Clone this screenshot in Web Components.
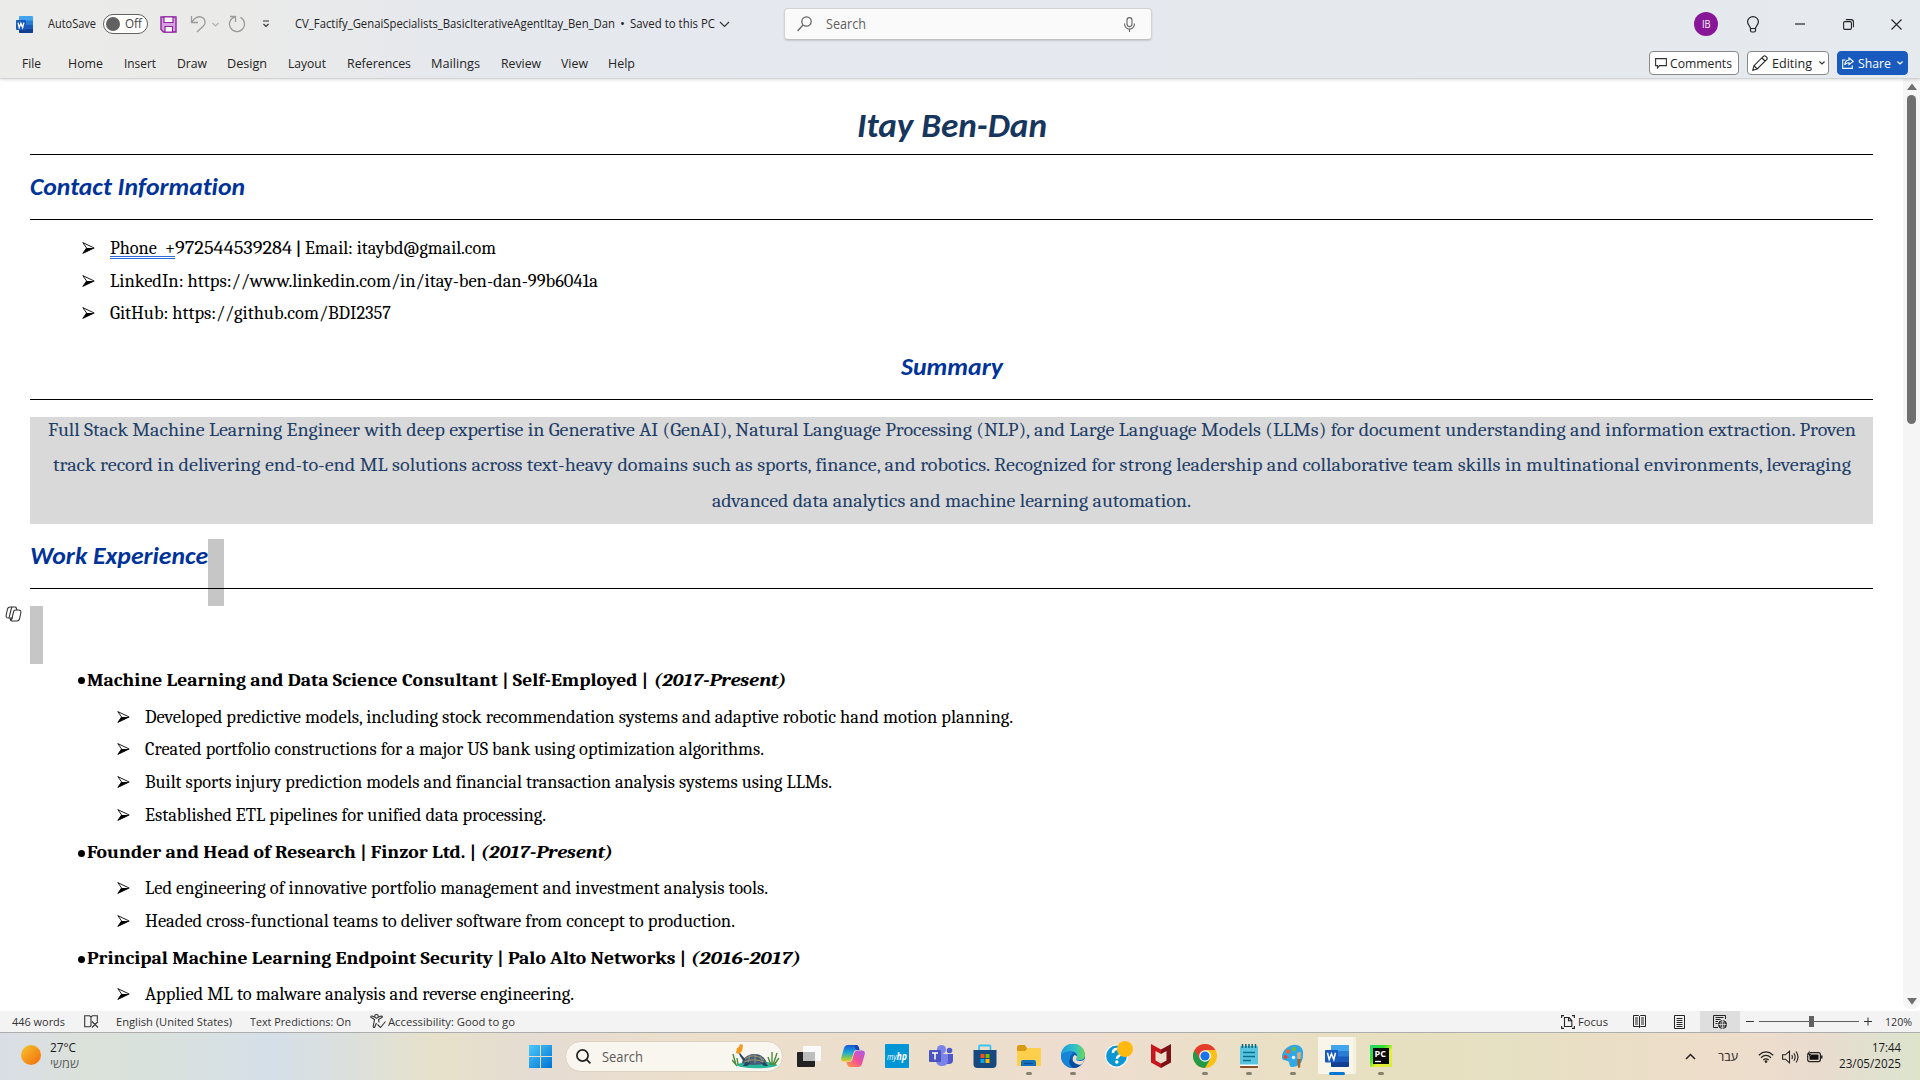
<!DOCTYPE html>
<html lang="en">
<head>
<meta charset="utf-8">
<title>Word</title>
<style>
html,body{margin:0;height:100%;overflow:hidden;background:#fff}
body{font-family:"Open Sans","Noto Sans",sans-serif;color:#242424}
</style>
</head>
<body>
<word-app></word-app>
<script>
const define=(name,html)=>customElements.define(name,class extends HTMLElement{
  constructor(){super();this.attachShadow({mode:'open'}).innerHTML=html;}
});

/* Text run stretched to an exact advance width: w = width, g = gap before it */
customElements.define('fit-text',class extends HTMLElement{
  constructor(){super();this.attachShadow({mode:'open'}).innerHTML=`<style>
    :host{display:inline-block;white-space:pre;flex:none;vertical-align:baseline;text-align:left}
    span{display:inline-block;transform-origin:0 50%;white-space:pre}</style><span><slot></slot></span>`;}
  connectedCallback(){
    const w=+this.getAttribute('w'),g=this.getAttribute('g');
    if(g)this.style.marginLeft=g+'px';
    const s=this.shadowRoot.querySelector('span');
    const fit=()=>{s.style.transform='none';this.style.width='auto';
      const n=s.getBoundingClientRect().width;
      this.style.width=w+'px';
      if(n)s.style.transform='scaleX('+(w/n)+')';};
    fit();
    requestAnimationFrame(fit);
  }
});

define('title-bar',`<style>
:host{display:flex;align-items:center;height:48px;font-size:12px;line-height:20px;color:#242424}
svg{display:block;flex:none}
.toggle{display:flex;align-items:center;box-sizing:border-box;width:45px;height:20px;margin-left:7px;border:1px solid #616161;border-radius:10px;background:#fff;color:#424242}
.knob{width:14px;height:14px;border-radius:50%;background:#616161;margin-left:2px}
.search{display:flex;align-items:center;box-sizing:border-box;width:368px;height:32px;margin-left:54px;border:1px solid #d2d3d5;border-bottom-color:#bfc0c2;border-radius:4px;background:#fafafa;color:#616161;box-shadow:0 1px 2px #0002;font-size:14px}
.ava{display:flex;align-items:center;justify-content:center;width:24px;height:24px;border-radius:50%;background:#881798;color:#fff;font-size:11.5px;margin-left:542px}
</style>
<svg style="margin-left:16px" width="17" height="17" viewBox="0 0 17 17"><rect x="3" y="0" width="14" height="17" rx="1" fill="#41a5ee"/><path d="M3 4.5h14v4H3z" fill="#2b7cd3"/><path d="M3 8.5h14v4H3z" fill="#185abd"/><path d="M3 12.5h14V16a1 1 0 0 1-1 1H4a1 1 0 0 1-1-1z" fill="#103f91"/><rect y="4" width="10" height="10" rx="1" fill="#185abd"/><path d="M2 6.6l1.2 5 1.7-4.4 1.7 4.4 1.3-5" fill="none" stroke="#fff" stroke-width="1.3"/></svg>
<fit-text g="15" w="48">AutoSave</fit-text>
<div class="toggle"><div class="knob"></div><fit-text g="5" w="17">Off</fit-text></div>
<svg style="margin-left:12px" width="17" height="17" viewBox="0 0 17 17"><path d="M1 1h15v15H3.5L1 13.5z" fill="#d9a0e0" stroke="#8e24a0" stroke-width="1.4"/><path d="M4 1h9v5.5H4zM5 10.500h7.500V16H5z" fill="#fff" stroke="#8e24a0" stroke-width="1.200"/></svg>
<svg style="margin-left:13px" width="17" height="18" viewBox="0 0 17 18" fill="none" stroke="#9b9b9b" stroke-width="1.3"><path d="M1.500 1v6.500H8M1.800 7.200C4 3 8 .8 11.600 2.200c4 1.600 4.600 6 1.800 8.800L7 17"/></svg>
<svg style="margin-left:5px" width="7" height="5" viewBox="0 0 7 5" fill="none" stroke="#b0b0b0" stroke-width="1.200"><path d="M.5 1l3 3 3-3"/></svg>
<svg style="margin-left:9px" width="18" height="18" viewBox="0 0 18 18" fill="none" stroke="#9b9b9b" stroke-width="1.3"><path d="M2 1.500h5.500V7M7 1.800A7.500 7.500 0 1 0 12.500 2.400"/></svg>
<svg style="margin-left:16px" width="8" height="8" viewBox="0 0 8 8" fill="none" stroke="#333" stroke-width="1.200"><path d="M1 1h6M1.500 4L4 6.500 6.500 4"/></svg>
<fit-text g="25" w="320">CV_Factify_GenaiSpecialists_BasicIterativeAgentItay_Ben_Dan</fit-text>
<fit-text g="5" w="5">•</fit-text>
<fit-text g="5" w="85">Saved to this PC</fit-text>
<svg style="margin-left:4px" width="11" height="7" viewBox="0 0 11 7" fill="none" stroke="#333" stroke-width="1.200"><path d="M1 1l4.500 4.500L10 1"/></svg>
<div class="search">
<svg style="margin-left:12px" width="16" height="16" viewBox="0 0 16 16" fill="none" stroke="#616161" stroke-width="1.200"><circle cx="9.500" cy="5.500" r="4.700"/><path d="M6 9L.6 15"/></svg>
<fit-text g="13" w="40">Search</fit-text>
<svg style="margin-left:258px" width="11" height="15" viewBox="0 0 11 15" fill="none" stroke="#616161" stroke-width="1.100"><rect x="3" y=".6" width="5" height="9" rx="2.500"/><path d="M.6 6.500v.7a4.900 4.900 0 0 0 9.800 0v-.7M5.500 12v3"/></svg>
</div>
<div class="ava"><fit-text w="8.500">IB</fit-text></div>
<svg style="margin-left:29px" width="12" height="17" viewBox="0 0 12 17" fill="none" stroke="#242424" stroke-width="1.200"><path d="M3.500 12.500c0-2.300-2.900-3.300-2.900-6.800a5.400 5.100 0 0 1 10.800 0c0 3.500-2.900 4.500-2.900 6.800zM3.500 12.500V14.500q0 1.500 1.500 1.500h2q1.500 0 1.500-1.500v-2"/></svg>
<svg style="margin-left:36px" width="10" height="2"><path d="M0 1h10" stroke="#242424" stroke-width="1.200"/></svg>
<svg style="margin-left:38px" width="11" height="11" viewBox="0 0 11 11" fill="none" stroke="#242424" stroke-width="1.100"><rect x=".6" y="2.600" width="7.800" height="7.800" rx="1.300"/><path d="M2.800.6h5.400q2.200 0 2.200 2.200v5.400"/></svg>
<svg style="margin-left:37px" width="11" height="11" viewBox="0 0 11 11"><path d="M.5.5l10 10M10.500.5l-10 10" stroke="#242424" stroke-width="1.100"/></svg>
`);

define('menu-bar',`<style>
:host{display:flex;align-items:center;height:30px;font-size:13px;line-height:22px;color:#242424}
svg{display:block;flex:none}
.btn{display:flex;align-items:center;box-sizing:border-box;height:24px;border:1px solid #8a8886;border-radius:4px;background:#fff;flex:none}
.share{background:#185abd;border-color:#185abd;color:#fff}
</style>
<fit-text g="22" w="19">File</fit-text><fit-text g="27" w="35">Home</fit-text><fit-text g="21" w="32">Insert</fit-text><fit-text g="21" w="30">Draw</fit-text><fit-text g="20" w="40">Design</fit-text><fit-text g="21" w="38">Layout</fit-text><fit-text g="21" w="64">References</fit-text><fit-text g="20" w="49">Mailings</fit-text><fit-text g="21" w="40">Review</fit-text><fit-text g="20" w="27">View</fit-text><fit-text g="20" w="27">Help</fit-text>
<div class="btn" style="margin-left:1014px;width:90px"><svg style="margin-left:5px" width="12" height="11" viewBox="0 0 12 11"><path d="M.6.6h10.800v7H4.500L2.500 10V7.600H.6z" fill="none" stroke="#333" stroke-width="1.100"/></svg><fit-text g="3" w="62">Comments</fit-text></div>
<div class="btn" style="margin-left:8px;width:82px"><svg style="margin-left:4px" width="16" height="16" viewBox="0 0 16 16" fill="none" stroke="#242424" stroke-width="1.100"><path d="M.8 15.200l1.200-4.500L11.600 1.200q1-.8 2 .0l1.200 1.200q.8 1 0 2L5.200 14zM10 3l3 3M2 10.700l3.200 3.300"/></svg><fit-text g="4" w="40">Editing</fit-text><svg style="margin-left:7px" width="6" height="4" viewBox="0 0 6 4" fill="none" stroke="#333" stroke-width="1.200"><path d="M.4.5L3 3 5.600.5"/></svg></div>
<div class="btn share" style="margin-left:8px;width:71px"><svg style="margin-left:4px" width="12" height="12" viewBox="0 0 12 12" fill="none" stroke="#fff" stroke-width="1.100"><path d="M3.500 3H.7v8.400h9.600V8.500M7 1l4.200 3.400L7 7.600V5.800C4.800 5.600 3.600 6.600 2.800 8c.1-3 1.700-4.700 4.200-5z"/></svg><fit-text g="4" w="33">Share</fit-text><svg style="margin-left:6px" width="6" height="4" viewBox="0 0 6 4" fill="none" stroke="#fff" stroke-width="1.200"><path d="M.4.5L3 3 5.600.5"/></svg></div>
`);

define('doc-heading',`<style>
:host{display:block;box-sizing:border-box;border-bottom:1px solid #000;position:relative;font:italic 700 25px/32px Carlito,Calibri,Lato,sans-serif;font-variant-ligatures:none;color:#039;white-space:nowrap}
:host([align=center]){text-align:center}
</style><slot></slot>`);

define('arrow-item',`<style>
:host{display:flex;align-items:center;height:var(--row,32.500px);line-height:24px}
svg{flex:none;width:13px;height:12px;margin-right:15px;display:block}
</style><svg viewBox="0 0 13 12"><path d="M.8.6L12.200 6 .8 11.400 4.600 6z" fill="#fff" stroke="#000" stroke-width=".9"/><path d="M4.600 6h7.600L.8 11.400z" fill="#000"/></svg><slot></slot>`);

define('job-title',`<style>
:host{display:flex;align-items:center;height:33px;margin:4.200px 0 3.600px 48px;font-weight:700;font-size:19px;line-height:28px}
i{width:7px;height:7px;border-radius:50%;background:#000;margin:2px 2px 0 0;flex:none}
::slotted([it]){font-style:italic}
</style><i></i><slot></slot>`);

define('word-document',`<style>
:host{display:block;width:1843px;height:932px;padding-left:30px;overflow:hidden;background:#fff;color:#000;font:17.600px/24px Caladea,Cambria,"Liberation Serif",serif;position:relative;flex:none;box-sizing:content-box}
.contact{padding:12px 0 0 52px;height:97.500px}
.ph{display:inline-block;position:relative}
.ph svg{position:absolute;left:0;top:20px}
.sum{background:#d9d9d9;height:107px;margin-top:17px;color:#1f3f68;font-size:19.200px;line-height:35.300px;display:flex;flex-direction:column;align-items:center}
.sum fit-text:first-child{margin-top:-4px}
.mark{position:absolute;left:178px;top:15px;width:16px;height:67px;background:linear-gradient(#000,#000) 0 49px/100% 1px no-repeat,#c6c6c6}
.empty{margin-top:17px;width:13px;height:58px;background:#c6c6c6}
.duties{--row:32.600px;padding-left:87px;margin-bottom:4.600px}
.cop{position:absolute;left:5px;top:527px}
</style>
<doc-heading align="center" style="height:76px;padding-top:29px;font-size:33.500px;line-height:36px;color:#17365d"><fit-text w="190">Itay Ben-Dan</fit-text></doc-heading>
<doc-heading style="height:65px;padding-top:16px"><fit-text w="215">Contact Information</fit-text></doc-heading>
<div class="contact">
<arrow-item><span class="ph"><fit-text w="65">Phone  +</fit-text><svg width="65" height="4"><path d="M0 .5h65M0 2.500h65" stroke="#2b6cd8" stroke-width="1"/></svg></span><fit-text w="117">972544539284</fit-text><fit-text w="13" style="font-weight:700"> | </fit-text><fit-text w="191">Email: itaybd@gmail.com</fit-text></arrow-item>
<arrow-item><fit-text w="488">LinkedIn: https://www.linkedin.com/in/itay-ben-dan-99b6041a</fit-text></arrow-item>
<arrow-item><fit-text w="281">GitHub: https://github.com/BDI2357</fit-text></arrow-item>
</div>
<doc-heading align="center" style="height:70.500px;padding-top:21.500px"><fit-text w="102">Summary</fit-text></doc-heading>
<div class="sum"><fit-text w="1808">Full Stack Machine Learning Engineer with deep expertise in Generative AI (GenAI), Natural Language Processing (NLP), and Large Language Models (LLMs) for document understanding and information extraction. Proven</fit-text><fit-text w="1798">track record in delivering end-to-end ML solutions across text-heavy domains such as sports, finance, and robotics. Recognized for strong leadership and collaborative team skills in multinational environments, leveraging</fit-text><fit-text w="479">advanced data analytics and machine learning automation.</fit-text></div>
<doc-heading style="height:65px;padding-top:15.500px"><fit-text w="178">Work Experience</fit-text><div class="mark"></div></doc-heading>
<div class="empty"></div>
<svg class="cop" width="17" height="16" viewBox="0 0 17 16" fill="none" stroke="#333" stroke-width="1.100"><path d="M5 1h5q1 0 1.300 1l.5 2h1.700q3 0 2.300 3l-1.300 6q-.6 2-2.500 2H7q-1.200 0-1.500-1l-.4-2H3.500Q.6 12 1.200 9l1.300-6Q3 1 5 1zM7.500 1Q6.700 1.200 6.200 3L4.500 10q-.4 2-1 2M11.800 4H10Q9 4 8.500 6l-1.700 7q-.4 2-1 2M5.100 12H8"/></svg>
<job-title style="margin-top:-.600px;margin-bottom:4.200px"><fit-text w="561">Machine Learning and Data Science Consultant | Self-Employed |</fit-text><fit-text it g="5.500" w="132.500">(2017-Present)</fit-text></job-title>
<div class="duties">
<arrow-item><fit-text w="868">Developed predictive models, including stock recommendation systems and adaptive robotic hand motion planning.</fit-text></arrow-item>
<arrow-item><fit-text w="619">Created portfolio constructions for a major US bank using optimization algorithms.</fit-text></arrow-item>
<arrow-item><fit-text w="687">Built sports injury prediction models and financial transaction analysis systems using LLMs.</fit-text></arrow-item>
<arrow-item><fit-text w="401">Established ETL pipelines for unified data processing.</fit-text></arrow-item>
</div>
<job-title><fit-text w="389">Founder and Head of Research | Finzor Ltd. |</fit-text><fit-text it g="5" w="132">(2017-Present)</fit-text></job-title>
<div class="duties">
<arrow-item><fit-text w="623">Led engineering of innovative portfolio management and investment analysis tools.</fit-text></arrow-item>
<arrow-item><fit-text w="590">Headed cross-functional teams to deliver software from concept to production.</fit-text></arrow-item>
</div>
<job-title style="margin-bottom:2.800px"><fit-text w="599">Principal Machine Learning Endpoint Security | Palo Alto Networks |</fit-text><fit-text it g="5" w="110">(2016-2017)</fit-text></job-title>
<div class="duties"><arrow-item><fit-text w="429">Applied ML to malware analysis and reverse engineering.</fit-text></arrow-item></div>
`);

define('scroll-bar',`<style>
:host{display:flex;flex-direction:column;align-items:center;width:17px;height:930px;margin-left:30px;background:#f5f5f5;border-radius:0 0 8px 8px;flex:none}
svg{display:block;margin-top:4px}
.thumb{width:9px;height:329px;border-radius:5px;background:#6f6f6f;margin:5px 0 570px}
</style><svg width="10" height="7"><path d="M5 0.500L10 7H0z" fill="#6f6f6f"/></svg><div class="thumb"></div><svg width="10" height="7"><path d="M0 0h10L5 6.800z" fill="#6f6f6f"/></svg>`);

define('status-bar',`<style>
:host{display:flex;align-items:center;height:21px;background:#f3f3f3;border-bottom:1px solid #adadad;font-size:11.500px;line-height:20px;color:#333}
svg{display:block;flex:none}
.sel{display:flex;align-items:center;justify-content:center;width:40px;height:21px;margin-left:15px;background:#dedede}
.slider{display:flex;align-items:center;width:100px;height:11px;margin-left:5px;background:linear-gradient(#616161,#616161) 0 5px/100% 1px no-repeat}
.slider i{width:5px;height:11px;background:#616161;margin-left:50px}
.d{margin-top:1px}
</style>
<fit-text g="12" w="53">446 words</fit-text>
<svg style="margin-left:19px" width="15" height="13" viewBox="0 0 15 13" fill="none" stroke="#333" stroke-width="1.100"><path d="M7 10.500V2L5.500.7H.7v11H6zM7 2L8.500.7h4.800V6M8 6.500l6 6M14 6.500l-6 6"/></svg>
<fit-text g="17" w="116">English (United States)</fit-text>
<fit-text class="d" g="18" w="101">Text Predictions: On</fit-text>
<svg style="margin-left:19px" width="16" height="15" viewBox="0 0 16 15" fill="none" stroke="#333" stroke-width="1.100"><circle cx="6.500" cy="2.300" r="1.800"/><path d="M4.700 3.300L2.200 2Q.6 1.800.8 3.200L4.500 5.500 3.200 12.500q.2 1.600 1.400.8L6.500 9M8.300 3.300L11 2q1.500-.1 1.300 1.200L8.600 5.500l.4 3M7.500 10.500l3 3L15.500 7.500"/></svg>
<fit-text class="d" g="2" w="127">Accessibility: Good to go</fit-text>
<svg style="margin-left:1046px" width="14" height="14" viewBox="0 0 14 14" fill="none" stroke="#242424" stroke-width="1.100"><path d="M.6 3V.6H3M11 .6h2.400V3M13.400 11v2.400H11M3 13.400H.6V11M3.500 2.500h4.500l2.800 3v6H3.500zM7.500 2.500v3.300h3.300"/></svg>
<fit-text class="d" g="3" w="30">Focus</fit-text>
<svg style="margin-left:25px" width="13" height="13" viewBox="0 0 13 13" fill="none" stroke="#242424" stroke-width="1"><path d="M6.500 1.500L5.500.5h-5v11h5l1 1 1-1h5V.5h-5zM6.500 1.500v11M2 3h3M2 5h3M2 7h3M2 9h3M8 3h3M8 5h3M8 7h3M8 9h3"/></svg>
<svg style="margin-left:28px" width="11" height="14" viewBox="0 0 11 14" fill="none" stroke="#242424" stroke-width="1"><path d="M.5.5h10v13H.5zM2.500 3.500h6M2.500 5.500h6M2.500 7.500h6M2.500 9.500h6M2.500 11.500h6"/></svg>
<div class="sel"><svg width="14" height="14" viewBox="0 0 14 14" fill="none" stroke="#242424" stroke-width="1"><path d="M12.500 4V.5H.5v12H5M2.500 2.500h8M2.500 4.500h5M2.500 6.500h2.500M2.500 8.500h2"/><circle cx="9.500" cy="9.500" r="4" fill="#333"/><path d="M5.500 9.500h8M9.500 5.500v8" stroke="#dedede" stroke-width=".8"/><ellipse cx="9.500" cy="9.500" rx="1.900" ry="4" stroke="#dedede" stroke-width=".7"/></svg></div>
<svg style="margin-left:6px" width="8" height="9"><path d="M0 4.500h8" stroke="#333"/></svg>
<div class="slider"><i></i></div>
<svg style="margin-left:5px" width="8" height="9"><path d="M0 4.500h8M4 .5v8" stroke="#333"/></svg>
<fit-text g="13" w="27">120%</fit-text>
`);

define('task-icon',`<style>
:host{display:flex;flex-direction:column;align-items:center;width:44px;height:47px;flex:none}
.i{display:flex;align-items:center;justify-content:center;height:24px;margin-top:11px}
b{display:none;width:6px;height:3px;border-radius:2px;background:#85816f;margin-top:4px}
:host([run]) b{display:block}
:host([active]) b{width:16px;background:#0078d4}
:host([active]){background:linear-gradient(#faf5ea,#faf5ea) 3px 4px/35px 37px no-repeat,linear-gradient(#f6f0df,#f6f0df) 3px 4px/38px 37px no-repeat}
</style><div class="i"><slot></slot></div><b></b>`);

define('task-bar',`<style>
:host{display:flex;height:47px;font-size:12px;line-height:16px;color:#1b1b1b;background:linear-gradient(90deg,#d9dee6 0,#dbe2d9 90px,#d9e1df 180px,#d5dfe8 270px,#dbe0de 340px,#e7e1ca 440px,#e5dcd3 530px,#ecdfcb 700px,#ecdecc 850px,#ebdfca 940px,#eeddd0 1080px,#ebdfc9 1200px,#e7e0c0 1390px,#e6e1c2 1500px,#e9dfc5 1580px,#eeddca 1720px,#e9dccf 1820px,#dfe2d0 1890px,#dee4cb 1920px)}
svg{display:block;flex:none}
.col{display:flex;flex-direction:column;margin-top:7px;flex:none}
.sun{width:20px;height:20px;border-radius:50%;margin:12px 0 0 21px;background:linear-gradient(135deg,#f7c52f,#f26a0a);flex:none}
.search{display:flex;align-items:center;box-sizing:border-box;width:218px;height:31px;margin:8px 4px 0 13px;border:1px solid #dcd2c2;border-radius:16px;background:#f9f5ef;font-size:14px;color:#5c5a57;flex:none}
.tray{display:flex;align-items:center;height:47px;flex:none}
</style>
<div class="sun"></div>
<div class="col" style="margin-left:9px;width:475px"><fit-text w="26">27°C</fit-text><fit-text w="29" style="color:#5a5f60;font-family:'Open Sans','DejaVu Sans',sans-serif">שמשי</fit-text></div>
<svg style="margin:12px 0 0 4px" width="23" height="23" viewBox="0 0 23 23"><defs><linearGradient id="g" x2="1" y2="1"><stop stop-color="#4cc9fb"/><stop offset="1" stop-color="#0072d2"/></linearGradient></defs><path d="M0 0h11v11H0zM12 0h11v11H12zM0 12h11v11H0zM12 12h11v11H12z" fill="url(#g)"/></svg>
<div class="search">
<svg style="margin-left:10px" width="15" height="15" viewBox="0 0 15 15" fill="none" stroke="#222" stroke-width="1.700"><circle cx="6.500" cy="6.500" r="5.600"/><path d="M10.600 10.600l3.800 3.800"/></svg>
<fit-text g="11" w="41">Search</fit-text>
<svg style="margin-left:89px" width="48" height="25" viewBox="0 0 48 25"><ellipse cx="25" cy="21" rx="20" ry="3.300" fill="#27b79a"/><path d="M1 10l3 11M5 14l1 7M0 16l5 6M45 9l-4 12M47 14l-5 7M40 8l0 13M36 13l3 8" stroke="#4a8c3a" stroke-width="1.400"/><path d="M10 19c0-4 6-10 13-9 6 0 10 4 12 9-6 2-18 3-25 0z" fill="#465d78"/><path d="M13 15q8-7 19 1M12 18q10-5 22 1" fill="none" stroke="#c6a24c" stroke-width=".8"/><path d="M18 11l-2 8M23 10v9M28 12l3 7" fill="none" stroke="#8fa6a0" stroke-width=".8"/><path d="M13 15L8 9Q6 8 8 12l4 6zM14 18l-3 4h4l4-3zM29 19l3 3h4l-3-4z" fill="#2c4464"/><path d="M4 9l1-5 2-1 1-3 3 1-1 6-3 3z" fill="#f39a1c"/></svg>
</div>
<task-icon><svg width="24" height="24" viewBox="0 0 24 24"><rect x="0" y="8" width="18" height="15" rx="1" fill="#222"/><rect x="6" y="2" width="18" height="15" rx="1" fill="#f9f9fa"/><path d="M6 8h12v9H6z" fill="#bdbdbd"/></svg></task-icon>
<task-icon><svg width="24" height="24" viewBox="0 0 24 24"><defs><linearGradient id="a" x2="0" y2="1"><stop stop-color="#1556d8"/><stop offset=".45" stop-color="#1aa8d5"/><stop offset=".8" stop-color="#8bcb4c"/><stop offset="1" stop-color="#f4c526"/></linearGradient><linearGradient id="b" x1="1" x2="0" y2="1"><stop stop-color="#a45cf0"/><stop offset=".5" stop-color="#f0509a"/><stop offset="1" stop-color="#ff9a3c"/></linearGradient></defs><path d="M7 1h8q2 0 2.700 2l.8 3h-3q-2 0-2.700 2l-2 7q-.8 2.500-3 2.500H3q-3.600 0-2.700-4L3 4q1-3 4-3z" fill="url(#a)"/><path d="M17 23H9q-2 0-2.700-2l-.8-3h3q2 0 2.700-2l2-7q.8-2.500 3-2.500H21q3.600 0 2.700 4L21 20q-1 3-4 3z" fill="url(#b)"/><path d="M13 1h2q2 0 2.700 2l.8 3H15z" fill="#1747b8"/></svg></task-icon>
<task-icon><svg width="24" height="24" viewBox="0 0 24 24"><rect width="24" height="24" rx="1" fill="#0096d6"/><text x="12" y="15.500" text-anchor="middle" textLength="20" lengthAdjust="spacingAndGlyphs" font-family="Open Sans" font-style="italic" fill="#fff" font-size="9">my<tspan font-weight="700" font-size="11">hp</tspan></text></svg></task-icon>
<task-icon><svg width="24" height="24" viewBox="0 0 24 24"><circle cx="12.500" cy="5.500" r="4.500" fill="#7b83eb"/><circle cx="20.500" cy="6.500" r="2.800" fill="#5059c9"/><path d="M16 10h8v6q0 4-4 4h-4z" fill="#5059c9"/><path d="M7 10h12v6q0 6-6 6t-6-6z" fill="#7b83eb"/><rect y="6" width="12" height="12" rx="1" fill="#4b53bc"/><path d="M3 9h6M6 9v6.500" stroke="#fff" stroke-width="1.500"/></svg></task-icon>
<task-icon><svg width="24" height="24" viewBox="0 0 24 24"><path d="M6 6V2.500Q6 1.500 7 1.500h9.500q1 0 1 1V6" fill="none" stroke="#3cc3f2" stroke-width="1.800"/><path d="M.5 6h23v14q0 4-4 4h-15q-4 0-4-4z" fill="#17497f"/><path d="M7.500 10H11.500v4h-4z" fill="#f25022"/><path d="M12.500 10h4v4h-4z" fill="#7fba00"/><path d="M7.500 15h4v4h-4z" fill="#00a4ef"/><path d="M12.500 15h4v4h-4z" fill="#ffb900"/></svg></task-icon>
<task-icon run><svg width="24" height="24" viewBox="0 0 24 24"><path d="M0 3q0-2 2-2h6l2 3v4H0z" fill="#d99a13"/><path d="M0 7h8l3-3h12q1 0 1 1v16q0 1-1 1H1q-1 0-1-1z" fill="#fdcf4d"/><path d="M4 22v-4q0-2 2-2h11q2 0 2 2v4z" fill="#1271bd"/><path d="M7 19.500h9" stroke="#0a4f8e" stroke-width="1.200"/></svg></task-icon>
<task-icon run><svg width="24" height="24" viewBox="0 0 24 24"><defs><linearGradient id="e" x2="1"><stop stop-color="#1b9ee0"/><stop offset=".6" stop-color="#35c1c4"/><stop offset="1" stop-color="#6bdc4b"/></linearGradient></defs><circle cx="12" cy="12" r="12" fill="#0f5fb0"/><path d="M0 12A12 12 0 0 1 24 11q0 5-5.500 5.300-3.500 0-3.500-1.600c0-1 1-1.200 1-3C16 9 13 7.500 9.500 7.500 4 7.500 0 12 0 12z" fill="url(#e)"/><path d="M0 12Q2 7.500 8 7.500q3 0 5 1.500c-4 1-5 6-3 9.500q2.500 4 5 5A12 12 0 0 1 0 12z" fill="#1685d8"/><path d="M15 14.700c0 1.600 2 2.500 4.500 2.200q2-.2 4-2-1 4-4 6-5-.5-7.500-4-1-3.500 1.500-6 2 .5 2.500 1.500 0 1-1 2.300z" fill="#eddccf"/><path d="M9.800 13q.5 6.500 7.500 8 2.200.2 3.500-1-3 4-8.800 4-4-3-3.800-7z" fill="#0d4c9c"/></svg></task-icon>
<task-icon><svg width="28" height="28" viewBox="0 0 28 28" style="margin:-2px 0 0 3px"><circle cx="11.500" cy="15" r="11" fill="#0b96d4" stroke="#fff" stroke-width="1.200"/><path d="M8 12q0-4 4-4t4 3.500q0 2-2.200 3.300-1.800 1-1.800 3" fill="none" stroke="#fff" stroke-width="2.600"/><circle cx="11.800" cy="21" r="1.700" fill="#fff"/><circle cx="20" cy="8" r="8" fill="#ffb90f"/></svg></task-icon>
<task-icon><svg width="20" height="24" viewBox="0 0 20 24"><path d="M0 0l10 5.500V10L4.500 7v9.500l5.500 3V24L0 18.500z" fill="#c8161d"/><path d="M20 0L10 5.500V10l5.500-3v9.500l-5.500 3V24l10-5.500z" fill="#7d1216"/></svg></task-icon>
<task-icon run><svg width="24" height="24" viewBox="0 0 24 24"><circle cx="12" cy="12" r="12" fill="#fbc116"/><path d="M1.600 6A12 12 0 0 1 22.400 6H12L6.800 15z" fill="#e33b2e"/><path d="M1.600 6A12 12 0 0 0 12 24l5.200-9H7z" fill="#229a48"/><path d="M1.600 6L7 15l5-9z" fill="#e33b2e"/><circle cx="12" cy="12" r="5.800" fill="#fff"/><circle cx="12" cy="12" r="4.600" fill="#1a73e8"/></svg></task-icon>
<task-icon run><svg width="20" height="25" viewBox="0 0 20 25"><rect x="1" y="21" width="18" height="3" rx="1" fill="#8a4b22"/><rect x="1" y="2" width="18" height="20" rx="1" fill="#58c4e0"/><path d="M1 20.500h18v1.500H1z" fill="#fff"/><path d="M3.500 0v4M6.800 0v4M10 0v4M13.200 0v4M16.500 0v4" stroke="#0c6478" stroke-width="1.500"/><path d="M4 8.500h12M4 12.500h12M4 16.500h8" stroke="#0d6f8a" stroke-width="1.600"/></svg></task-icon>
<task-icon run><svg width="24" height="24" viewBox="0 0 24 24"><path d="M12 1C19 0 23 5 22 11c0 8-5 12-11 12-3 0-2-3-3-5s-7 0-7-5C1 7 6 2 12 1z" fill="#30a8e6"/><circle cx="4.500" cy="13" r="2" fill="#e34a2b"/><circle cx="7" cy="7.500" r="2.200" fill="#f0672c"/><circle cx="13" cy="5" r="2.200" fill="#6fbd3c"/><circle cx="12.500" cy="13.500" r="1.800" fill="#e8f4fa"/><path d="M16 9q3-2 4 0l-.5 6h-3z" fill="#dfae74"/><path d="M16.300 15h3.400l-.6 8q-1.200 2-2.200 0z" fill="#a95e22"/></svg></task-icon>
<task-icon run active><svg width="24" height="24" viewBox="0 0 24 24"><rect x="6" y="1" width="18" height="22" rx="1.500" fill="#185abd"/><path d="M6 7V2.500Q6 1 7.500 1h15Q24 1 24 2.500V7z" fill="#41a5ee"/><path d="M6 7h18v5.500H6z" fill="#2b7cd3"/><path d="M6 18h18v3.500q0 1.500-1.500 1.500h-15Q6 23 6 21.500z" fill="#103f91"/><rect y="6" width="13" height="12.500" rx="1" fill="#185abd"/><path d="M2.500 8.800L4.200 15.500 6.500 9.800l2.300 5.700 1.700-6.700" fill="none" stroke="#fff" stroke-width="1.500"/></svg></task-icon>
<task-icon run><svg width="22" height="22" viewBox="0 0 22 22"><defs><linearGradient id="p" x2="1" y2="1"><stop stop-color="#1fd77a"/><stop offset=".35" stop-color="#35df2d"/><stop offset=".6" stop-color="#e9f032"/><stop offset="1" stop-color="#d6ec3c"/></linearGradient></defs><rect width="22" height="22" rx="1" fill="url(#p)"/><rect x="3" y="3" width="16" height="16" fill="#0a0a0a"/><text x="4.500" y="11.500" font-family="Open Sans" font-weight="700" font-size="8.500" textLength="11.500" lengthAdjust="spacingAndGlyphs" fill="#fff">PC</text><path d="M5 16.500h6" stroke="#fff" stroke-width="1.300"/></svg></task-icon>
<div class="tray">
<svg style="margin-left:282px" width="11" height="7" viewBox="0 0 11 7" fill="none" stroke="#222" stroke-width="1.500"><path d="M1 6l4.500-4.500L10 6"/></svg>
<fit-text g="22" w="20" style="font-family:'Open Sans','DejaVu Sans',sans-serif">עבר</fit-text>
<svg style="margin-left:20px" width="16" height="12" viewBox="0 0 16 12" fill="none" stroke="#222" stroke-width="1.200"><path d="M.8 4.200q7.200-6.600 14.400 0M3 6.700q5-4.600 10 0M5.300 9q2.700-2.400 5.400 0"/><circle cx="8" cy="10.600" r="1.300" fill="#222" stroke="none"/></svg>
<svg style="margin-left:8px" width="17" height="14" viewBox="0 0 17 14" fill="none" stroke="#222" stroke-width="1.100"><path d="M.6 4.800h2.800L7.500 1.200v11.600L3.400 9.200H.6zM9.800 5q1.200 2 0 4M11.900 3.200q2.500 3.800 0 7.600M14 1.500q4 5.500 0 11"/></svg>
<svg style="margin-left:7px" width="17" height="13" viewBox="0 0 17 13"><rect x="1.600" y="2.600" width="12.800" height="9" rx="2" fill="none" stroke="#222" stroke-width="1.200"/><rect x="3.500" y="4.500" width="9" height="5.300" rx=".6" fill="#111"/><path d="M15 5.500h1.500v3H15z" fill="#222"/><path d="M4 0L.5 5H3L2 8.500 6 3.500H3.500z" fill="#111" stroke="#eddccf" stroke-width=".4"/></svg>
</div>
<div class="col" style="align-items:flex-end;margin-left:15px;width:63px"><fit-text w="29">17:44</fit-text><fit-text w="62">23/05/2025</fit-text></div>
`);

define('word-app',`<style>
:host{display:flex;flex-direction:column;width:1920px;height:1080px;background:#fff}
header{height:78px;border-bottom:1px solid #d2d3d5;background:linear-gradient(90deg,#ebebe9 0,#eaeae9 240px,#e5e8ed 460px,#e5e8ee 900px,#e5eaee 1920px);box-shadow:0 1px 3px #0002;position:relative;z-index:1;flex:none}
main{display:flex;height:932px;flex:none;overflow:hidden}
</style>
<header><title-bar></title-bar><menu-bar></menu-bar></header>
<main><word-document></word-document><scroll-bar></scroll-bar></main>
<status-bar></status-bar>
<task-bar></task-bar>`);
</script>
</body>
</html>
